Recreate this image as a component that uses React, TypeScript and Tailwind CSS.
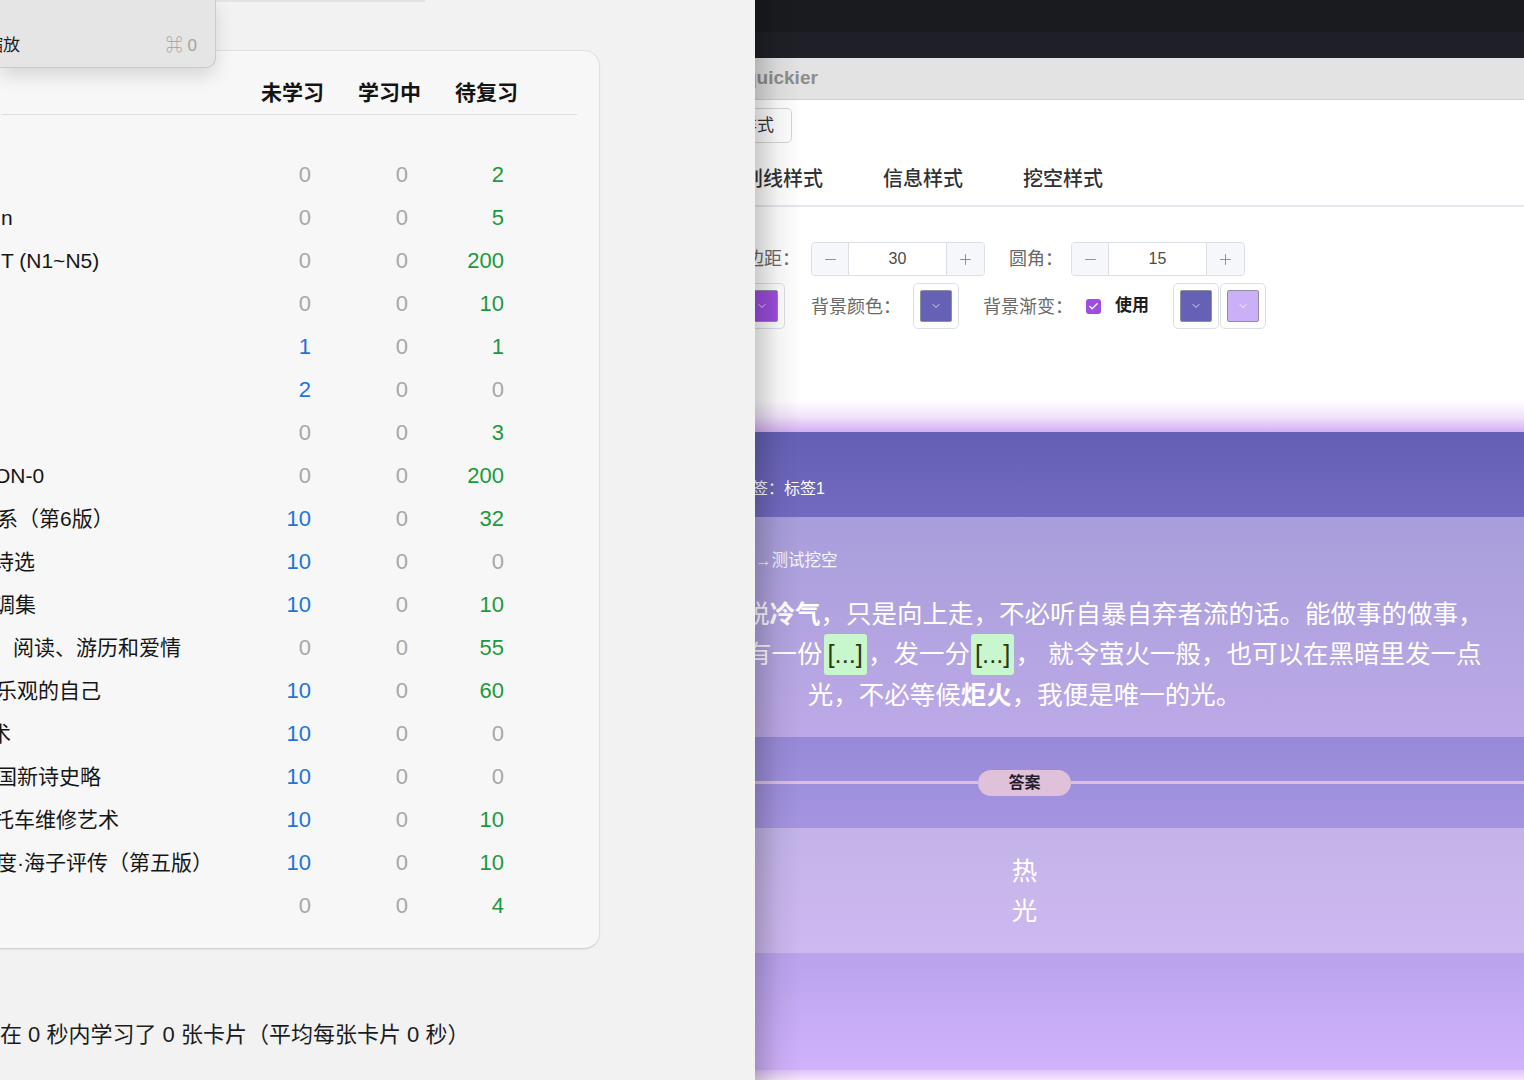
import React from 'react';
import { Minus, Plus, ChevronDown, Check } from 'lucide-react';

type Row = { name: string; shift: string; nums: [number, number, number] };

// 左侧牌组统计（名称被窗口左缘截断）
const rows: Row[] = [
  { name: '', shift: '', nums: [0, 0, 2] },
  { name: 'n', shift: '', nums: [0, 0, 5] },
  { name: 'T (N1~N5)', shift: '', nums: [0, 0, 200] },
  { name: '', shift: '', nums: [0, 0, 10] },
  { name: '', shift: '', nums: [1, 0, 1] },
  { name: '', shift: '', nums: [2, 0, 0] },
  { name: '', shift: '', nums: [0, 0, 3] },
  { name: 'ON-0', shift: 'ml-[-7px]', nums: [0, 0, 200] },
  { name: '系（第6版）', shift: 'ml-[-4px]', nums: [10, 0, 32] },
  { name: '诗选', shift: 'ml-[-8px]', nums: [10, 0, 0] },
  { name: '调集', shift: 'ml-[-7px]', nums: [10, 0, 10] },
  { name: '阅读、游历和爱情', shift: 'ml-[12px]', nums: [0, 0, 55] },
  { name: '乐观的自己', shift: 'ml-[-5px]', nums: [10, 0, 60] },
  { name: '术', shift: 'ml-[-11px]', nums: [10, 0, 0] },
  { name: '国新诗史略', shift: 'ml-[-5px]', nums: [10, 0, 0] },
  { name: '托车维修艺术', shift: 'ml-[-8px]', nums: [10, 0, 10] },
  { name: '度·海子评传（第五版）', shift: 'ml-[-5px]', nums: [10, 0, 10] },
  { name: '', shift: '', nums: [0, 0, 4] },
];

const gray = 'text-[#a7a7a7]';

function NumInput({ value }: { value: string }) {
  return (
    <div className="flex h-[34px] w-[174px] overflow-hidden rounded-[4px] border border-[#dcdfe6] bg-white">
      <div className="flex w-[37px] items-center justify-center border-r border-[#dcdfe6] bg-[#f5f7fa] text-[#7d7f84]">
        <Minus size={17} strokeWidth={1.2} />
      </div>
      <div className="flex flex-1 items-center justify-center text-[16px] text-[#4b4b4b]">{value}</div>
      <div className="flex w-[38px] items-center justify-center border-l border-[#dcdfe6] bg-[#f5f7fa] text-[#7d7f84]">
        <Plus size={17} strokeWidth={1.2} />
      </div>
    </div>
  );
}

function Swatch({ fill }: { fill: string }) {
  return (
    <div className="flex h-[46px] w-[46px] shrink-0 items-center justify-center rounded-[5px] border border-[#dcdfe6] bg-white">
      <div className={`flex h-[32px] w-[32px] items-center justify-center rounded-[2px] border border-[#8e8ea0] ${fill}`}>
        <ChevronDown size={12} strokeWidth={1.5} className="text-white" />
      </div>
    </div>
  );
}

function Cloze() {
  return (
    <span className="mx-[1px] inline-block rounded-[3px] bg-[#c8f6cd] px-[4px] leading-[41px] text-[#2c3a10]">[...]</span>
  );
}

export default function App() {
  return (
    <div className="flex h-[1080px] w-[1524px] overflow-hidden font-['Liberation_Sans','Noto_Sans_CJK_SC',sans-serif]">
      {/* 左：统计窗口 */}
      <div className="relative flex w-[755px] shrink-0 flex-col bg-[#f2f2f2]">
        <div className="absolute left-[216px] top-0 h-[2px] w-[209px] bg-[#e3e3e3]" />

        <div className="absolute left-0 top-0 z-10 flex h-[68px] w-[216px] items-start rounded-br-[10px] border-b border-r border-[#c9c9c9] bg-[#e5e5e5] pt-[34px] shadow-[0_8px_18px_rgba(0,0,0,0.13)]">
          <span className="ml-[-14px] text-[17px] leading-[24px] text-[#1f1f1f]">缩放</span>
          <span className="ml-auto mr-[18px] text-[17px] leading-[24px] text-[#a2a2a2]">⌘ 0</span>
        </div>

        <div className="ml-[-20px] mt-[50px] w-[620px] rounded-r-[16px] border border-[#e0e0e0] border-b-[#d2d2d2] bg-[#f7f7f7] pl-[20px] pr-[22px] shadow-[0_1px_2px_rgba(0,0,0,0.06)]">
          <div className="grid h-[64px] grid-cols-[243px_97px_97px_97px] items-end border-b border-[#dedede] pb-[9px] text-[21px] font-bold leading-[24px] text-[#141414]">
            <div />
            <div className="text-center">未学习</div>
            <div className="text-center">学习中</div>
            <div className="text-center">待复习</div>
          </div>
          <div className="pb-[21px] pt-[38px]">
            {rows.map((r, i) => (
              <div key={i} className="grid h-[43px] grid-cols-[243px_97px_97px_97px] items-center text-[22px] leading-none">
                <div className="whitespace-nowrap text-[21px] text-[#161616]">
                  <span className={`block ${r.shift}`}>{r.name}</span>
                </div>
                <div className={`pr-[30px] text-right ${r.nums[0] > 0 ? 'text-[#1c74dc]' : gray}`}>{r.nums[0]}</div>
                <div className={`pr-[30px] text-right ${gray}`}>{r.nums[1]}</div>
                <div className={`pr-[31px] text-right ${r.nums[2] > 0 ? 'text-[#1b9a3d]' : gray}`}>{r.nums[2]}</div>
              </div>
            ))}
          </div>
        </div>

        <div className="mt-[73px] whitespace-nowrap text-[22px] leading-[26px] text-[#1c1c1c]">
          在 0 秒内学习了 0 张卡片（平均每张卡片 0 秒）
        </div>
      </div>

      {/* 右：样式设置窗口 */}
      <div className="relative flex-1 overflow-hidden">
        <div className="ml-[-230px] flex h-full w-[999px] flex-col">
          <div className="h-[32px] bg-[#1a1b1f]" />
          <div className="h-[26px] bg-[#1f2027]" />
          <div className="flex h-[42px] items-center border-b border-[#cfcfcf] bg-[#e3e3e3] pl-[220px] text-[19px] font-bold text-[#8d8d8d]">
            quickier
          </div>

          <div className="flex h-[300px] flex-col bg-white">
            <div className="ml-[197px] mt-[8px] flex h-[35px] w-[70px] items-center justify-center rounded-[5px] border border-[#d6d6d6] text-[17px] text-[#333]">
              样式
            </div>
            <div className="mt-[7px] flex h-[57px] items-center gap-[60px] border-b-2 border-[#e4e7ed] pl-[218px] pt-[2px] text-[20px] font-medium text-[#303133]">
              <span>划线样式</span>
              <span>信息样式</span>
              <span>挖空样式</span>
            </div>
            <div className="mt-[35px] flex h-[34px] items-center pl-[221px] text-[18px] text-[#6a6a6a]">
              <span>边距：</span>
              <div className="ml-[11px]"><NumInput value="30" /></div>
              <span className="ml-[24px]">圆角：</span>
              <div className="ml-[8px]"><NumInput value="15" /></div>
            </div>
            <div className="mt-[7px] flex h-[46px] items-center pl-[214px] text-[18px] text-[#6a6a6a]">
              <Swatch fill="bg-[#9d4ddf]" />
              <span className="ml-[26px] pt-[3px]">背景颜色：</span>
              <div className="ml-[12px]"><Swatch fill="bg-[#6561b5]" /></div>
              <span className="ml-[24px] pt-[3px]">背景渐变：</span>
              <div className="ml-[13px] flex h-[15px] w-[15px] items-center justify-center rounded-[3px] bg-[#9e4de0]">
                <Check size={11} strokeWidth={3} className="text-white" />
              </div>
              <span className="ml-[14px] text-[17px] font-bold text-[#1d1d1d]">使用</span>
              <div className="ml-[24px]"><Swatch fill="bg-[#6561b5]" /></div>
              <div className="ml-[1px]"><Swatch fill="bg-[#cbb0f7]" /></div>
            </div>
          </div>
          <div className="h-[32px] bg-linear-to-b from-white via-[#f1e5fb] to-[#d5aef2]" />

          {/* 卡片预览 */}
          <div className="h-[85px] bg-linear-to-b from-[#6460b4] to-[#726ac1] pl-[211px] pt-[47px] text-[16px] leading-[20px] text-white">
            标签：标签1
          </div>
          <div className="h-[220px] bg-linear-to-b from-[#a89edb] to-[#bda9e7] pt-[33px]">
            <div className="pl-[197px] text-[16.5px] leading-[20px] text-white/90">默认→测试挖空</div>
            <div className="mt-[24px] whitespace-nowrap text-center text-[25.5px] leading-[40px] text-white">
              愿中国青年都摆脱<b>冷气</b>，只是向上走，不必听自暴自弃者流的话。能做事的做事，
              <br />
              能发声的发声。有一份<Cloze />，发一分<Cloze />， 就令萤火一般，也可以在黑暗里发一点
              <br />
              光，不必等候<b>炬火</b>，我便是唯一的光。
            </div>
          </div>
          <div className="flex h-[91px] items-center bg-linear-to-b from-[#9889d8] to-[#a595e1]">
            <div className="h-[3px] flex-1 bg-[#dcc0dd]" />
            <div className="flex h-[26px] w-[93px] items-center justify-center rounded-full bg-[#dfc1da] text-[16px] font-bold text-[#261c2c]">
              答案
            </div>
            <div className="h-[3px] flex-1 bg-[#dcc0dd]" />
          </div>
          <div className="h-[125px] bg-linear-to-b from-[#c3b3e8] to-[#ceb9f1] pt-[23px] text-center text-[25.5px] leading-[40px] text-white">
            <div>热</div>
            <div>光</div>
          </div>
          <div className="h-[117px] bg-linear-to-b from-[#b9a3ed] to-[#d1b2fc]" />
          <div className="flex-1 bg-linear-to-b from-[#e0c2f8] to-[#f4e6fc]" />
        </div>
        <div className="pointer-events-none absolute inset-y-0 left-0 w-[46px] bg-linear-to-r from-black/20 via-black/5 to-transparent" />
      </div>
    </div>
  );
}
